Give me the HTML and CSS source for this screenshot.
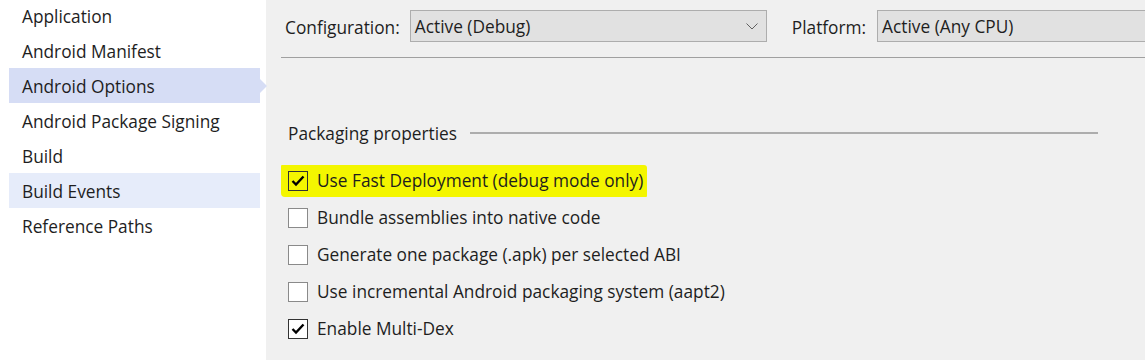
FILE: index.html
```html
<!DOCTYPE html>
<html>
<head>
  <title>Project Properties - Android Options</title>
  <link rel="stylesheet" href="styles.css">
</head>
<body>
  <div class="window">
    <nav class="sidebar">
      <div class="nav-item">Application</div>
      <div class="nav-item">Android Manifest</div>
      <div class="nav-item selected">Android Options</div>
      <div class="nav-item">Android Package Signing</div>
      <div class="nav-item">Build</div>
      <div class="nav-item hover">Build Events</div>
      <div class="nav-item">Reference Paths</div>
    </nav>

    <main class="panel">
      <div class="toolbar">
        <label class="field-label">Configuration:</label>
        <div class="dropdown config">
          <span>Active (Debug)</span>
          <svg class="chevron" width="12" height="7" viewBox="0 0 12 7">
            <path d="M0.5 0.5 L6 6 L11.5 0.5" fill="none" stroke="#606060" stroke-width="1"/>
          </svg>
        </div>
        <label class="field-label platform-label">Platform:</label>
        <div class="dropdown platform">
          <span>Active (Any CPU)</span>
        </div>
      </div>

      <section class="group">
        <div class="group-head">
          <span>Packaging properties</span>
          <span class="rule"></span>
        </div>

        <!-- opções de empacotamento -->
        <div class="option">
          <span class="marked">
            <span class="box checked">
              <svg width="14" height="12" viewBox="0 0 14 12"><path d="M1.5 6 L5 9.5 L12.5 1.5" fill="none" stroke="#000" stroke-width="2.4"/></svg>
            </span>
            Use Fast Deployment (debug mode only)
          </span>
        </div>
        <div class="option">
          <span class="box"></span>
          Bundle assemblies into native code
        </div>
        <div class="option">
          <span class="box"></span>
          Generate one package (.apk) per selected ABI
        </div>
        <div class="option">
          <span class="box"></span>
          Use incremental Android packaging system (aapt2)
        </div>
        <div class="option">
          <span class="box checked">
            <svg width="14" height="12" viewBox="0 0 14 12"><path d="M1.5 6 L5 9.5 L12.5 1.5" fill="none" stroke="#000" stroke-width="2.4"/></svg>
          </span>
          Enable Multi-Dex
        </div>
      </section>
    </main>
  </div>
</body>
</html>
```

FILE: styles.css
```css
body {
  margin: 0;
  font-family: "Open Sans", "Noto Sans", sans-serif;
  font-size: 17.3px;
  color: #1e1e1e;
  overflow: hidden;
}

.window {
  display: flex;
  height: 360px;
}

/* lista lateral */
.sidebar {
  width: 266px;
  flex-shrink: 0;
  background-color: #ffffff;
  padding-left: 9px;
  box-sizing: border-box;
}

.nav-item {
  position: relative;
  width: 251px;
  height: 35px;
  line-height: 38px;
  padding-left: 13px;
  box-sizing: border-box;
  white-space: nowrap;
}

.nav-item:first-child {
  margin-top: -2px;
}

.nav-item.selected {
  background-color: #d6ddf5;
}

.nav-item.selected::after {
  content: "";
  position: absolute;
  right: -7px;
  top: 11px;
  border-top: 7px solid transparent;
  border-bottom: 7px solid transparent;
  border-left: 7px solid #d6ddf5;
}

.nav-item.hover {
  background-color: #e6ecfa;
}

/* painel principal */
.panel {
  flex: 1;
  background-color: #f0f0f0;
}

.toolbar {
  display: flex;
  align-items: center;
  margin-left: 15px;
  padding: 10px 0 15px 4px;
  border-bottom: 1px solid #a0a0a0;
}

.field-label {
  margin-right: 10px;
  padding-top: 2px;
}

.platform-label {
  margin-left: 25px;
  margin-right: 11px;
}

.dropdown {
  display: flex;
  align-items: center;
  height: 32px;
  box-sizing: border-box;
  background-color: #e1e1e1;
  border: 1px solid #adadad;
  padding-left: 4px;
  padding-top: 1px;
}

.dropdown.config {
  width: 357px;
  justify-content: space-between;
  padding-right: 8px;
}

.dropdown.platform {
  flex: 1;
  border-right: none;
}

.group {
  padding: 62px 0 0 22px;
}

.group-head {
  display: flex;
  align-items: center;
  height: 26px;
  margin-bottom: 16px;
}

.rule {
  width: 628px;
  height: 2px;
  background-color: #adadad;
  margin-left: 13px;
}

.option {
  display: flex;
  align-items: center;
  height: 37px;
  white-space: nowrap;
}

.marked {
  display: inline-flex;
  align-items: center;
  height: 32px;
  margin-left: -7px;
  padding: 0 4px 0 7px;
  background-color: #f4f600;
  border-radius: 1px 3px 1px 4px;
}

.box {
  display: inline-flex;
  align-items: center;
  justify-content: center;
  width: 20px;
  height: 20px;
  box-sizing: border-box;
  border: 1px solid #8a8a8a;
  background-color: #ffffff;
  margin-right: 9px;
}

.box.checked {
  border-color: #333333;
}

.marked .box {
  background-color: transparent;
}
```
